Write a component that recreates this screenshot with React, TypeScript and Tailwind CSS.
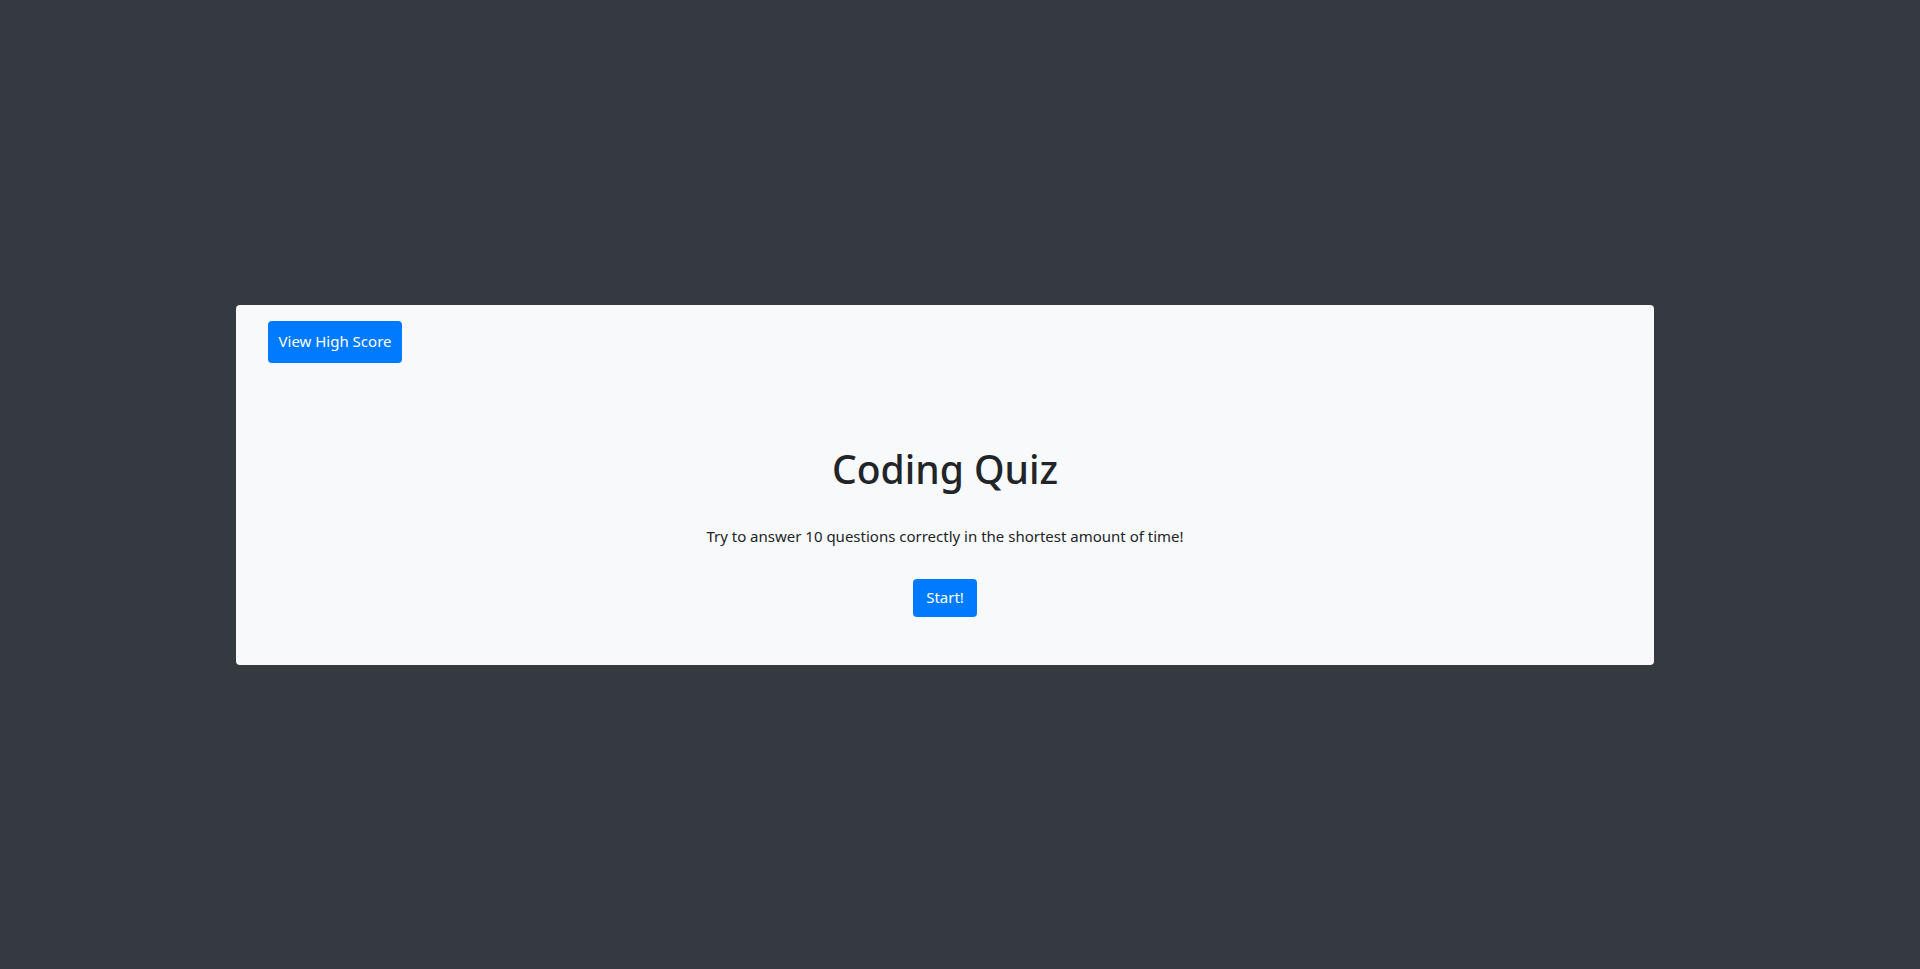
export default function App() {
  return (
    <div
      className="flex h-[969px] items-center overflow-hidden bg-[#343a40] pl-[236px]"
      style={{ fontFamily: '"Noto Sans", "Open Sans", sans-serif' }}
    >
      <div className="flex h-[360px] w-[1418px] flex-col rounded bg-[#f8f9fa] px-8 pt-4 text-[#212529]">
        <div>
          <button
            type="button"
            className="h-[42px] w-[134px] rounded bg-[#007bff] text-[15px] text-white"
          >
            View High Score
          </button>
        </div>
        <h1 className="mt-[82px] text-center text-[39px] leading-[48px] font-medium">Coding Quiz</h1>
        <p className="mt-[31px] text-center text-[15px] leading-6">
          Try to answer 10 questions correctly in the shortest amount of time!
        </p>
        <div className="mt-[31px] flex justify-center">
          <button
            type="button"
            className="h-[38px] w-[64px] rounded bg-[#007bff] text-[15px] text-white"
          >
            Start!
          </button>
        </div>
      </div>
    </div>
  );
}
